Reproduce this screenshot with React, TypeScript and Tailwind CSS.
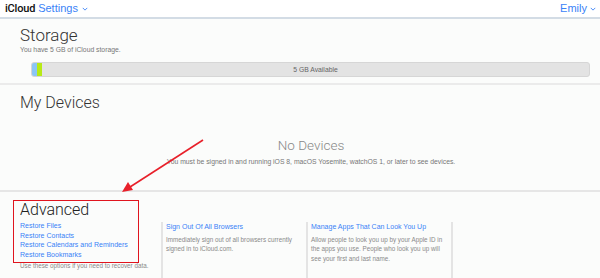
import * as React from "react";

function Chevron({ className }: { className?: string }) {
  return (
    <svg viewBox="0 0 8 5" className={className} fill="none" stroke="currentColor" strokeWidth="1.2">
      <path d="M1 1l3 3 3-3" />
    </svg>
  );
}

function LinkColumn({ title, lines }: { title: string; lines: string[] }) {
  return (
    <div className="w-[145px] border-l-2 border-[#e4e4e4] pl-[3px]">
      <div className="whitespace-nowrap text-[7px] leading-[9.5px] text-[#3a82f7]">{title}</div>
      <div className="mt-[3px] whitespace-nowrap text-[6.3px] leading-[9.6px] text-[#8a8a8a]">
        {lines.map((l) => (
          <div key={l}>{l}</div>
        ))}
      </div>
    </div>
  );
}

export default function App() {
  return (
    <div
      className="relative h-[278px] w-[600px] overflow-hidden bg-[#fbfcfb] text-[#222]"
      style={{ fontFamily: '"Liberation Sans", Arial, sans-serif' }}
    >
      {/* top bar */}
      <div className="flex h-[19px] items-center justify-between border-b-2 border-[#d3dce5] bg-white pl-[5px] pr-[4px]">
        <div className="flex items-center text-[11px] leading-[17px]">
          <span className="font-medium tracking-[-0.2px] text-[#111]" style={{ fontFamily: "Roboto, sans-serif" }}>
            iCloud
          </span>
          <span className="ml-[3px] text-[#3a82f7]">Settings</span>
          <Chevron className="ml-[4px] h-[4px] w-[6px] text-[#3a82f7]" />
        </div>
        <div className="flex items-center text-[11px] leading-[17px] text-[#3a82f7]">
          <span>Emily</span>
          <Chevron className="ml-[3px] h-[4px] w-[6px]" />
        </div>
      </div>

      {/* storage */}
      <div className="h-[66px] border-b-2 border-[#ebebeb] px-[20px] pt-[6px]">
        <div className="text-[17px] leading-[20px] font-light text-[#333]" style={{ fontFamily: "Roboto, sans-serif" }}>
          Storage
        </div>
        <div className="text-[6.8px] leading-[10px] text-[#777]">You have 5 GB of iCloud storage.</div>
        <div className="ml-[11px] mr-[-10px] mt-[7px] flex h-[15px] items-center overflow-hidden rounded-[3px] border border-[#d6d6d6] bg-[#e3e3e3]">
          <div className="h-full w-[5px] bg-[#8cc6f5]" />
          <div className="h-full w-[5px] bg-[#b7ea16]" />
          <div className="flex-1 text-center text-[6.8px] leading-[13px] text-[#666]">5 GB Available</div>
        </div>
      </div>

      {/* devices */}
      <div className="h-[107px] border-b-2 border-[#e6e6e6] px-[20px] pt-[8px]">
        <div className="text-[16px] leading-[20px] font-light text-[#333]" style={{ fontFamily: "Roboto, sans-serif" }}>
          My Devices
        </div>
        <div className="mt-[23px] flex flex-col items-center pl-[22px]">
          <div className="text-[13.5px] leading-[18px] font-light text-[#888]" style={{ fontFamily: "Roboto, sans-serif" }}>
            No Devices
          </div>
          <div className="mt-[3px] text-[6.8px] leading-[10px] text-[#777]">
            You must be signed in and running iOS 8, macOS Yosemite, watchOS 1, or later to see devices.
          </div>
        </div>
      </div>

      {/* advanced */}
      <div className="flex pl-[20px]">
        <div className="w-[141px] pt-[8px]">
          <div className="text-[16px] leading-[20px] font-light text-[#222]" style={{ fontFamily: "Roboto, sans-serif" }}>
            Advanced
          </div>
          <div className="mt-[1px] whitespace-nowrap text-[7px] leading-[9.6px] text-[#3a82f7]">
            <div>Restore Files</div>
            <div>Restore Contacts</div>
            <div>Restore Calendars and Reminders</div>
            <div>Restore Bookmarks</div>
          </div>
          <div className="mt-[2px] whitespace-nowrap text-[6.3px] leading-[10px] text-[#8a8a8a]">
            Use these options if you need to recover data.
          </div>
        </div>
        <div className="mt-[30px] flex h-[60px]">
          <LinkColumn title="Sign Out Of All Browsers" lines={["Immediately sign out of all browsers currently", "signed in to iCloud.com."]} />
          <LinkColumn
            title="Manage Apps That Can Look You Up"
            lines={["Allow people to look you up by your Apple ID in", "the apps you use. People who look you up will", "see your first and last name."]}
          />
          <div className="border-l-2 border-[#e4e4e4]" />
        </div>
      </div>

      {/* annotation */}
      <div className="pointer-events-none absolute left-[13px] top-[200px] h-[63px] w-[126px] border-[1.5px] border-[#e0141e]" />
      <svg className="pointer-events-none absolute left-0 top-0" width="600" height="278">
        <line x1="203" y1="140" x2="130" y2="187" stroke="#e8202a" strokeWidth="1.6" />
        <path d="M122 192 L128 182 L133 190 Z" fill="#e8202a" />
      </svg>
    </div>
  );
}
